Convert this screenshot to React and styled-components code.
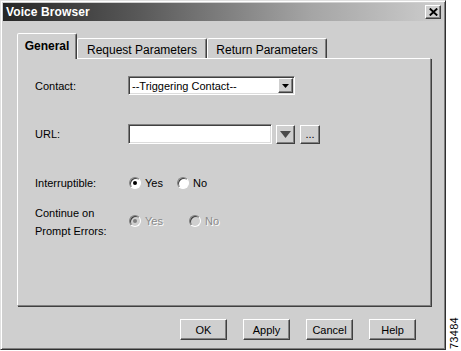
import React from 'react';
import styled, { createGlobalStyle, css } from 'styled-components';

const GlobalStyle = createGlobalStyle`
  html, body {
    margin: 0;
    padding: 0;
    background: #ffffff;
  }
  body {
    font-family: "Liberation Sans", Arial, sans-serif;
    font-size: 11px;
    color: #000;
  }
`;

const FACE = '#cfcfcf';

const raised = css`
  border: 1px solid;
  border-color: #ffffff #404040 #404040 #ffffff;
  box-shadow: inset -1px -1px 0 #808080;
  background: ${FACE};
`;

const sunken = css`
  border: 1px solid;
  border-color: #808080 #ffffff #ffffff #808080;
  box-shadow: inset 1px 1px 0 #404040, inset -1px -1px 0 #dcdcdc;
  background: #ffffff;
`;

const Page = styled.div`
  display: flex;
  width: 461px;
  height: 351px;
  background: #fff;
`;

const Dialog = styled.div`
  box-sizing: border-box;
  width: 446px;
  height: 350px;
  background: ${FACE};
  border: 1px solid;
  border-color: #e0e0e0 #303030 #303030 #e0e0e0;
  box-shadow: inset 1px 1px 0 #ffffff, inset -1px -1px 0 #808080;
  padding: 2px 2px;
  display: flex;
  flex-direction: column;
`;

const TitleBar = styled.div`
  height: 18px;
  display: flex;
  align-items: center;
  justify-content: space-between;
  padding: 0 2px 0 3px;
  background: linear-gradient(90deg, #262626 0%, #575757 30%, #a5a5a5 70%, #cdcdcd 100%);
`;

const Title = styled.span`
  color: #fff;
  font-weight: bold;
  font-size: 12px;
  letter-spacing: 0.1px;
`;

const CloseButton = styled.div`
  ${raised};
  box-sizing: border-box;
  width: 16px;
  height: 14px;
  display: flex;
  align-items: center;
  justify-content: center;
`;

const Body = styled.div`
  flex: 1;
  display: flex;
  flex-direction: column;
  padding: 12px 0 0 14px;
`;

const TabStrip = styled.div`
  display: flex;
  align-items: flex-end;
  height: 25px;
  position: relative;
  z-index: 1;
`;

const Tab = styled.div`
  box-sizing: border-box;
  background: ${FACE};
  border: 1px solid;
  border-bottom: none;
  border-color: #ffffff #404040 transparent #ffffff;
  box-shadow: inset -1px 0 0 #808080;
  border-radius: 2px 2px 0 0;
  font-size: 12px;
  display: flex;
  align-items: center;
  justify-content: center;
  width: ${(p) => p.$width}px;
  ${(p) =>
    p.$active
      ? css`
          height: 26px;
          margin-bottom: -1px;
          font-weight: bold;
          padding-bottom: 2px;
        `
      : css`
          height: 20px;
          padding-top: 2px;
        `}
`;

const Panel = styled.div`
  box-sizing: border-box;
  width: 414px;
  height: 248px;
  border: 1px solid;
  border-color: #ffffff #808080 #808080 #ffffff;
  box-shadow: 1px 1px 0 #404040;
  padding: 16px 0 0 17px;
  display: grid;
  grid-template-columns: 93px 1fr;
  align-content: start;
`;

const Label = styled.div`
  font-size: 11px;
  line-height: ${(p) => p.$lh || 14}px;
  margin-top: ${(p) => p.$mt || 0}px;
  align-self: center;
`;

const Field = styled.div`
  display: flex;
  align-items: center;
  margin-top: ${(p) => p.$mt || 0}px;
`;

const Select = styled.div`
  ${sunken};
  box-sizing: border-box;
  width: 167px;
  height: 19px;
  display: flex;
  align-items: center;
  justify-content: space-between;
  padding: 2px 1px 2px 3px;
  font-size: 11px;
`;

const SelectButton = styled.div`
  ${raised};
  box-sizing: border-box;
  width: 15px;
  height: 15px;
  display: flex;
  align-items: center;
  justify-content: center;
`;

const TextBox = styled.div`
  ${sunken};
  box-sizing: border-box;
  width: 144px;
  height: 20px;
`;

const SmallButton = styled.div`
  ${raised};
  box-sizing: border-box;
  width: ${(p) => p.$width}px;
  height: 19px;
  margin-left: ${(p) => p.$ml || 0}px;
  display: flex;
  align-items: center;
  justify-content: center;
  font-size: 11px;
`;

const RadioGroup = styled.div`
  display: flex;
  align-items: center;
  gap: ${(p) => p.$gap}px;
  margin-left: 1px;
  margin-top: ${(p) => p.$mt || 0}px;
`;

const Option = styled.label`
  display: flex;
  align-items: center;
  gap: 4px;
  font-size: 11px;
  color: ${(p) => (p.$disabled ? '#8a8a8a' : '#000')};
  text-shadow: ${(p) => (p.$disabled ? '1px 1px 0 #ffffff' : 'none')};
`;

const RadioCircle = styled.span`
  box-sizing: border-box;
  width: 12px;
  height: 12px;
  border-radius: 50%;
  border: 1px solid;
  border-color: #808080 #ffffff #ffffff #808080;
  box-shadow: inset 1px 1px 0 #404040;
  background: ${(p) => (p.$disabled ? FACE : '#fff')};
  display: flex;
  align-items: center;
  justify-content: center;
  &::after {
    content: '';
    width: 4px;
    height: 4px;
    border-radius: 50%;
    background: ${(p) => (p.$checked ? (p.$disabled ? '#808080' : '#000') : 'transparent')};
  }
`;

const ButtonRow = styled.div`
  display: flex;
  gap: 16px;
  margin: 13px 0 0 163px;
`;

const DialogButton = styled.div`
  ${raised};
  box-sizing: border-box;
  width: 47px;
  height: 21px;
  display: flex;
  align-items: center;
  justify-content: center;
  font-size: 11px;
`;

const Side = styled.div`
  flex: 1;
  display: flex;
  align-items: flex-end;
  justify-content: center;
  padding-bottom: 2px;
`;

const Figure = styled.span`
  writing-mode: vertical-rl;
  transform: rotate(180deg);
  font-size: 11px;
  letter-spacing: 0.3px;
`;

function Radio({ label, checked, disabled }) {
  return (
    <Option $disabled={disabled}>
      <RadioCircle $checked={checked} $disabled={disabled} />
      {label}
    </Option>
  );
}

export default function App() {
  return (
    <>
      <GlobalStyle />
      <Page>
        <Dialog>
          <TitleBar>
            <Title>Voice Browser</Title>
            <CloseButton>
              <svg width="9" height="8" viewBox="0 0 9 8">
                <path d="M0.8 0.5 L8.2 7.5 M8.2 0.5 L0.8 7.5" stroke="#000" strokeWidth="1.9" />
              </svg>
            </CloseButton>
          </TitleBar>
          <Body>
            <TabStrip>
              <Tab $active $width={60}>General</Tab>
              <Tab $width={130}>Request Parameters</Tab>
              <Tab $width={120}>Return Parameters</Tab>
            </TabStrip>
            <Panel>
              <Label $mt={1}>Contact:</Label>
              <Field $mt={1}>
                <Select>
                  <span>--Triggering Contact--</span>
                  <SelectButton>
                    <svg width="7" height="4" viewBox="0 0 7 4">
                      <path d="M0 0 H7 L3.5 4 Z" fill="#000" />
                    </svg>
                  </SelectButton>
                </Select>
              </Field>

              <Label $mt={29}>URL:</Label>
              <Field $mt={29}>
                <TextBox />
                <SmallButton $width={19} $ml={4}>
                  <svg width="11" height="7" viewBox="0 0 11 7">
                    <path d="M0 0 H11 L5.5 7 Z" fill="#4a4a4a" />
                  </svg>
                </SmallButton>
                <SmallButton $width={20} $ml={5}>
                  ...
                </SmallButton>
              </Field>

              <Label $mt={32}>Interruptible:</Label>
              <RadioGroup $gap={14} $mt={32}>
                <Radio label="Yes" checked />
                <Radio label="No" />
              </RadioGroup>

              <Label $mt={14} $lh={18}>
                Continue on
                <br />
                Prompt Errors:
              </Label>
              <RadioGroup $gap={26} $mt={11}>
                <Radio label="Yes" checked disabled />
                <Radio label="No" disabled />
              </RadioGroup>
            </Panel>
            <ButtonRow>
              <DialogButton>OK</DialogButton>
              <DialogButton>Apply</DialogButton>
              <DialogButton>Cancel</DialogButton>
              <DialogButton>Help</DialogButton>
            </ButtonRow>
          </Body>
        </Dialog>
        <Side>
          <Figure>73484</Figure>
        </Side>
      </Page>
    </>
  );
}
